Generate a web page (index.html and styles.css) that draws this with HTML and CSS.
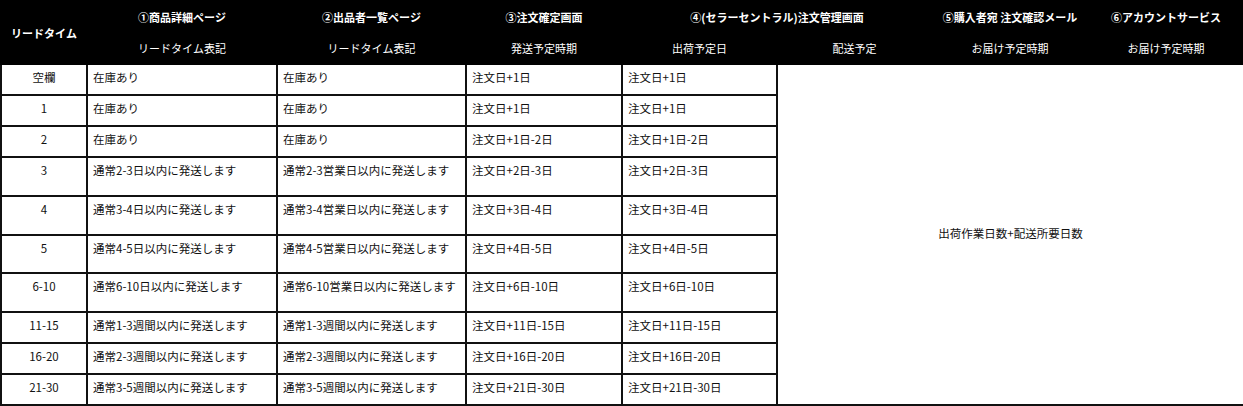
FILE: index.html
```html
<!DOCTYPE html>
<html lang="ja">
<head>
<meta charset="utf-8">
<title>リードタイム</title>
<link rel="stylesheet" href="styles.css">
</head>
<body>
<table class="lt">
  <colgroup>
    <col class="c1"><col class="c2"><col class="c3"><col class="c4">
    <col class="c5"><col class="c6"><col class="c7"><col class="c8">
  </colgroup>
  <thead>
    <tr class="h1">
      <th rowspan="2" class="lead">リードタイム</th>
      <th>①商品詳細ページ</th>
      <th>②出品者一覧ページ</th>
      <th>③注文確定画面</th>
      <th colspan="2">④(セラーセントラル)注文管理画面</th>
      <th>⑤購入者宛 注文確認メール</th>
      <th>⑥アカウントサービス</th>
    </tr>
    <tr class="h2">
      <th class="sub">リードタイム表記</th>
      <th class="sub">リードタイム表記</th>
      <th class="sub">発送予定時期</th>
      <th class="sub">出荷予定日</th>
      <th class="sub">配送予定</th>
      <th class="sub">お届け予定時期</th>
      <th class="sub">お届け予定時期</th>
    </tr>
  </thead>
  <tbody>
    <tr class="short">
      <td class="num">空欄</td><td>在庫あり</td><td>在庫あり</td><td>注文日+1日</td><td>注文日+1日</td>
      <td rowspan="10" colspan="3" class="merged">出荷作業日数+配送所要日数</td>
    </tr>
    <tr class="short"><td class="num">1</td><td>在庫あり</td><td>在庫あり</td><td>注文日+1日</td><td>注文日+1日</td></tr>
    <tr class="short"><td class="num">2</td><td>在庫あり</td><td>在庫あり</td><td>注文日+1日-2日</td><td>注文日+1日-2日</td></tr>
    <tr class="tall"><td class="num">3</td><td>通常2-3日以内に発送します</td><td>通常2-3営業日以内に発送します</td><td>注文日+2日-3日</td><td>注文日+2日-3日</td></tr>
    <tr class="tall"><td class="num">4</td><td>通常3-4日以内に発送します</td><td>通常3-4営業日以内に発送します</td><td>注文日+3日-4日</td><td>注文日+3日-4日</td></tr>
    <tr class="tall2"><td class="num">5</td><td>通常4-5日以内に発送します</td><td>通常4-5営業日以内に発送します</td><td>注文日+4日-5日</td><td>注文日+4日-5日</td></tr>
    <tr class="tall"><td class="num">6-10</td><td>通常6-10日以内に発送します</td><td>通常6-10営業日以内に発送します</td><td>注文日+6日-10日</td><td>注文日+6日-10日</td></tr>
    <tr class="short"><td class="num">11-15</td><td>通常1-3週間以内に発送します</td><td>通常1-3週間以内に発送します</td><td>注文日+11日-15日</td><td>注文日+11日-15日</td></tr>
    <tr class="short"><td class="num">16-20</td><td>通常2-3週間以内に発送します</td><td>通常2-3週間以内に発送します</td><td>注文日+16日-20日</td><td>注文日+16日-20日</td></tr>
    <tr class="short"><td class="num">21-30</td><td>通常3-5週間以内に発送します</td><td>通常3-5週間以内に発送します</td><td>注文日+21日-30日</td><td>注文日+21日-30日</td></tr>
  </tbody>
</table>
</body>
</html>
```

FILE: styles.css
```css
html {
  background: #6e6e6e;
}
body {
  margin: 0;
  background: #ffffff;
  width: 1243px;
  font-family: "Noto Sans CJK JP", "Noto Sans", sans-serif;
  font-size: 11.5px;
  color: #111111;
}
.lt {
  width: 1243px;
  table-layout: fixed;
  border-collapse: collapse;
  border: 2px solid #111111;
}
.c1 { width: 86px; }
.c2 { width: 190px; }
.c3 { width: 189px; }
.c4 { width: 156px; }
.c5 { width: 155px; }
.c6 { width: 155px; }
.c7 { width: 156px; }
.c8 { width: 156px; }

.lt th {
  background: #000000;
  color: #ffffff;
  font-size: 11px;
  font-weight: bold;
  text-align: center;
  padding: 0;
  border: 2px solid #000000;
  line-height: 16px;
  white-space: nowrap;
}
.lt .h1 { height: 33px; }
.lt .h1 th { vertical-align: top; padding-top: 7px; }
.lt .h2 { height: 30px; }
.lt .h2 th { vertical-align: top; padding-top: 5px; }
.lt th.lead { vertical-align: middle; padding-top: 0; }
.lt th.sub { font-weight: normal; }

.lt td {
  border: 2px solid #111111;
  padding: 4px 5px 0 5px;
  vertical-align: top;
  line-height: 16px;
  white-space: nowrap;
}
.lt td.num { text-align: center; padding-left: 0; padding-right: 0; }
.lt td.merged {
  text-align: center;
  vertical-align: middle;
  padding: 0 0 3px 0;
}
.short { height: 31px; }
.tall { height: 39px; }
.tall2 { height: 38px; }
```
